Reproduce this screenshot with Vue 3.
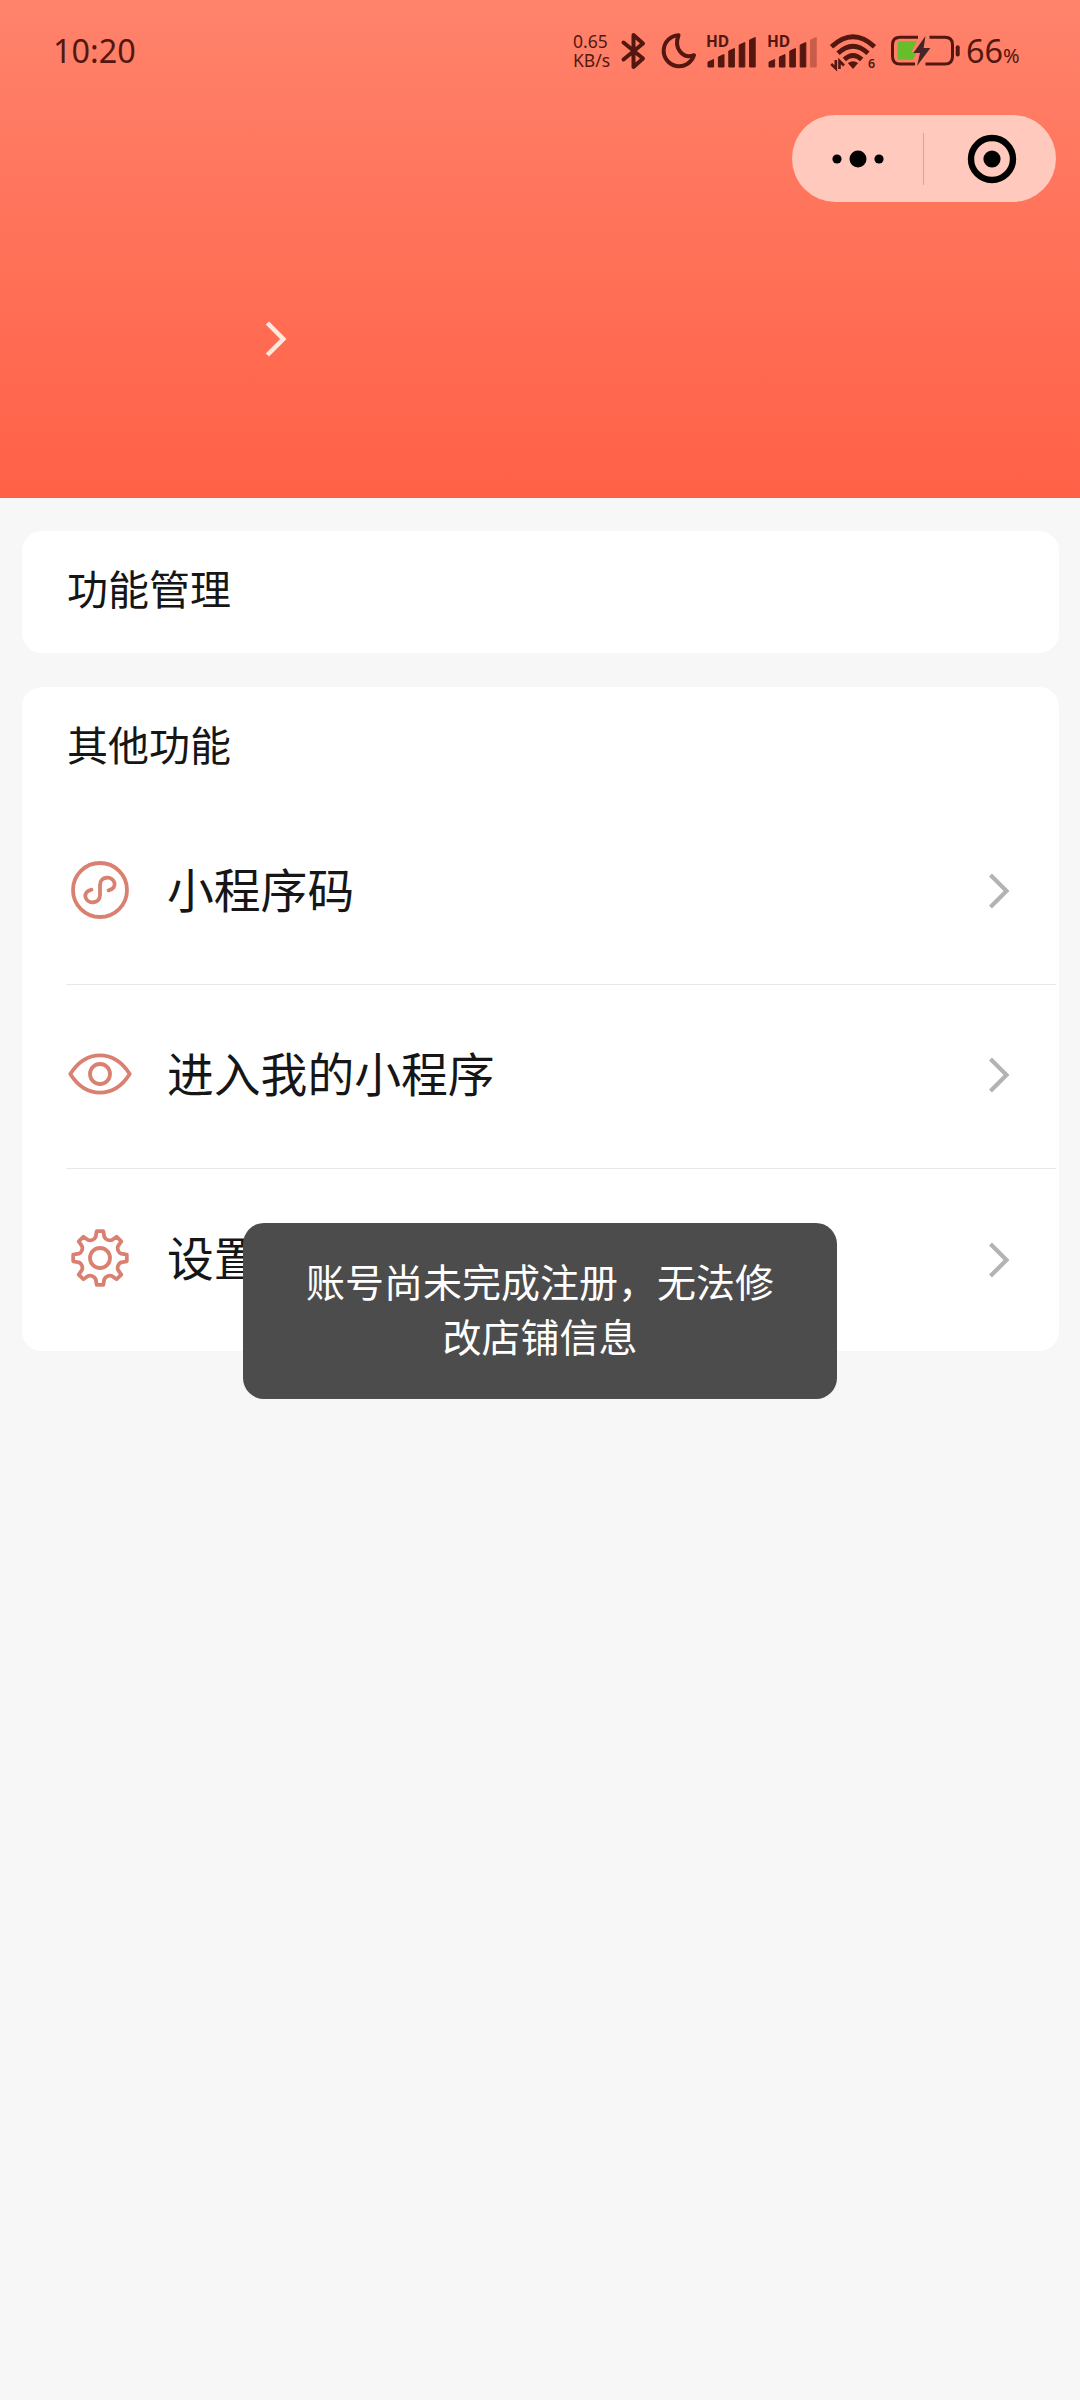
<script setup>
const rows = [
  { icon: 'code', label: '小程序码' },
  { icon: 'eye', label: '进入我的小程序' },
  { icon: 'gear', label: '设置' },
]
const bars = [8, 13, 19, 25, 30]

// Outline of an eight-toothed gear centred on the origin
const gearPath = (() => {
  const points = []
  for (let i = 0; i < 8; i++) {
    for (const [offset, radius] of [[-11.5, 21.6], [-7, 27], [7, 27], [11.5, 21.6]]) {
      const a = ((i * 45 + offset - 90) * Math.PI) / 180
      points.push([radius * Math.cos(a), radius * Math.sin(a)].map((n) => n.toFixed(2)).join(' '))
    }
  }
  let d = `M${points[0]}`
  for (let i = 0; i < 8; i++) {
    const p = i * 4
    d += ` L${points[p + 1]} L${points[p + 2]} L${points[p + 3]}`
    d += ` A6.2 6.2 0 0 0 ${points[(p + 4) % 32]}`
  }
  return d + 'Z'
})()
</script>

<template>
  <div class="page">
    <header class="header">
      <div class="status">
        <span class="time">10:20</span>
        <div class="speed"><span>0.65</span><span>KB/s</span></div>
        <svg class="bluetooth" width="26" height="38" viewBox="0 0 26 38">
          <path d="M2.5 10.5 L22 26.5 L12.5 35 V3 L22 11.5 L2.5 27.5" fill="none" stroke="currentColor" stroke-width="4" stroke-linejoin="round" stroke-linecap="round" />
        </svg>
        <svg class="moon" width="36" height="36" viewBox="0 0 36 36">
          <path d="M17.5 2.2 A15.5 15.5 0 1 0 33 22.2 C22 26.5 12.5 15.5 17.5 2.2Z" fill="none" stroke="currentColor" stroke-width="4" stroke-linejoin="round" />
        </svg>
        <div v-for="n in 2" :key="n" class="signal">
          <span class="hd">HD</span>
          <svg width="50" height="31" viewBox="0 0 50 31">
            <path
              v-for="(h, i) in bars"
              :key="i"
              :d="`M${1 + i * 10.4} 30 V${33 - h} L${6.6 + i * 10.4} ${30.5 - h} V30Z`"
              fill="currentColor"
              stroke="currentColor"
              stroke-width="1"
              stroke-linejoin="round"
              :opacity="n === 2 && i === 4 ? 0.32 : 1"
            />
          </svg>
        </div>
        <svg class="wifi" width="47" height="40" viewBox="0 0 47 40">
          <g fill="none" stroke="currentColor" stroke-width="4.8">
            <path d="M1.5 12.8 Q23 -7.2 44.5 12.8" />
            <path d="M8 19.3 Q23 5.2 38 19.3" />
            <path d="M14.3 25.4 Q23 17.4 31.7 25.4" />
          </g>
          <path d="M17.8 29 Q23 25.6 28.2 29 L23 35Z" fill="currentColor" />
          <path d="M5.8 26 V34.5 L1.2 30 M9.5 35 V27 L14 31.5" fill="none" stroke="currentColor" stroke-width="2.6" />
          <text x="38" y="34.4" font-size="12.5" font-weight="600" fill="currentColor">6</text>
        </svg>
        <svg class="battery" width="70" height="32" viewBox="0 0 70 32">
          <path d="M27 2.3 H9 Q1.5 2.3 1.5 9.8 V21.6 Q1.5 29.1 9 29.1 H24 M38.5 2.3 H54 Q61.5 2.3 61.5 9.8 V21.6 Q61.5 29.1 54 29.1 H34.5" fill="none" stroke="currentColor" stroke-width="3" />
          <path d="M66.7 12.2 V19.4" stroke="currentColor" stroke-width="4" stroke-linecap="round" />
          <path d="M8.5 6.2 H26 L20.5 16.5 L25 18 L22 24.8 H8.5 Q6.5 24.8 6.5 22.8 V8.2 Q6.5 6.2 8.5 6.2Z" fill="#68bd2b" />
          <path d="M34.5 1 L22.4 18 H29 L26 31 L39.4 13 H32.6Z" fill="#482328" />
        </svg>
        <span class="percent">66<small>%</small></span>
      </div>

      <div class="capsule">
        <div class="half">
          <svg width="52" height="18" viewBox="0 0 52 18">
            <circle cx="5" cy="9" r="4.6" /><circle cx="26" cy="9" r="8.5" /><circle cx="47" cy="9" r="4.6" />
          </svg>
        </div>
        <span class="split"></span>
        <div class="half">
          <svg width="50" height="50" viewBox="0 0 50 50">
            <circle cx="25" cy="25" r="21" fill="none" stroke="#000" stroke-width="6.4" /><circle cx="25" cy="25" r="8.6" />
          </svg>
        </div>
      </div>

      <svg class="profile-arrow" width="24" height="38" viewBox="0 0 24 38">
        <path d="M3.4 3 L19.3 19 L3.4 35" fill="none" stroke="#ffe8dd" stroke-width="4.6" />
      </svg>
    </header>

    <main class="content">
      <section class="card manage"><h2>功能管理</h2></section>
      <section class="card others">
        <h2>其他功能</h2>
        <div v-for="row in rows" :key="row.icon" class="row">
          <svg class="icon" width="66" height="60" viewBox="-33 -30 66 60" fill="none" stroke="#d98070" stroke-width="3.8" stroke-linejoin="round" stroke-linecap="round">
            <template v-if="row.icon === 'code'">
              <circle r="27" />
              <path d="M8.5 .3 C13.5 -.8 15.4 -4 14.4 -7.5 C12 -14.5 0 -14 0 -5 V5 C0 14 -12 14.5 -14.4 7.5 C-15.4 4 -13.5 .8 -8.5 -.3" />
            </template>
            <template v-else-if="row.icon === 'eye'">
              <path d="M-29.7 0 C-14 -24.8 14 -24.8 29.7 0 C14 24.8 -14 24.8 -29.7 0Z" />
              <circle r="10" />
            </template>
            <template v-else>
              <path :d="gearPath" />
              <circle r="10" />
            </template>
          </svg>
          <span class="label">{{ row.label }}</span>
          <svg class="arrow" width="22" height="38" viewBox="0 0 22 38">
            <path d="M2.5 3 L18.5 19 L2.5 35" fill="none" stroke="#b3b3b3" stroke-width="4.2" />
          </svg>
        </div>
      </section>
    </main>

    <div class="toast">账号尚未完成注册，无法修改店铺信息</div>
  </div>
</template>

<style>
body {
  background: #f7f7f7;
}
</style>

<style scoped>
.page {
  position: relative;
  width: 1080px;
  height: 2400px;
  overflow: hidden;
  background: #f7f7f7;
  color: #161616;
  font-family: "Noto Sans", "Noto Sans CJK SC", sans-serif;
}
.page svg {
  display: block;
  flex: none;
  overflow: visible;
}
.header {
  box-sizing: border-box;
  height: 498px;
  padding-top: 30px;
  background: linear-gradient(#ff836c, #ff7a62 24%, #ff6147);
}
.status {
  display: flex;
  align-items: flex-start;
  height: 85px;
  padding-left: 53px;
  color: #54170f;
}
.time {
  width: 520px;
  font-size: 32.4px;
  line-height: 40px;
}
.speed {
  display: flex;
  flex-direction: column;
  width: 48px;
  padding-top: 2px;
  font-size: 17.5px;
  line-height: 19px;
  white-space: nowrap;
}
.bluetooth {
  margin-top: 2px;
}
.moon {
  margin: 3px 10px 0 14px;
}
.signal {
  position: relative;
  width: 50px;
  margin-right: 11px;
  padding-top: 7px;
}
.hd {
  position: absolute;
  left: -1px;
  top: 3px;
  font-size: 15.5px;
  font-weight: 700;
  line-height: 17px;
}
.wifi {
  margin: 4px 0 0 1px;
}
.battery {
  margin: 5px 0 0 14px;
}
.percent {
  margin-left: 5px;
  font-size: 32.4px;
  line-height: 40px;
  white-space: nowrap;
}
.percent small {
  font-size: 20px;
}
.capsule {
  display: flex;
  align-items: center;
  width: 264px;
  height: 87px;
  margin-left: 792px;
  border-radius: 44px;
  background: #ffc9bd;
}
.half {
  display: flex;
  flex: none;
  align-items: center;
  justify-content: center;
  width: 131px;
}
.half:last-child {
  padding-left: 3px;
  width: 129px;
}
.split {
  width: 1px;
  height: 52px;
  background: #d9a49b;
}
.profile-arrow {
  margin: 118px 0 0 264px;
}
.content {
  display: flex;
  flex-direction: column;
  gap: 34px;
  padding: 33px 21px 0 22px;
}
.card {
  border-radius: 20px;
  background: #fff;
}
.manage {
  height: 122px;
}
.others {
  height: 664px;
}
h2 {
  margin: 0;
  padding: 28px 0 0 45px;
  font-size: 41px;
  font-weight: 400;
  line-height: 60px;
}
.others h2 {
  height: 86px;
}
.row {
  display: flex;
  align-items: center;
  box-sizing: border-box;
  height: 184px;
  margin: 0 3px 0 44px;
  border-bottom: 1px solid #e8e8e8;
}
.row:last-child {
  border-bottom: 0;
}
.icon {
  margin: 0 0 6px 1px;
}
.label {
  flex: 1;
  margin: 0 0 6px 34px;
  font-size: 46.8px;
  line-height: 64px;
}
.arrow {
  margin: 0 46px 3px 0;
}
.toast {
  position: absolute;
  left: 243px;
  top: 1223px;
  box-sizing: border-box;
  width: 594px;
  height: 176px;
  padding: 31px 62px;
  border-radius: 21px;
  background: #4c4c4c;
  color: #fff;
  font-size: 39px;
  line-height: 55px;
  text-align: center;
}
</style>
